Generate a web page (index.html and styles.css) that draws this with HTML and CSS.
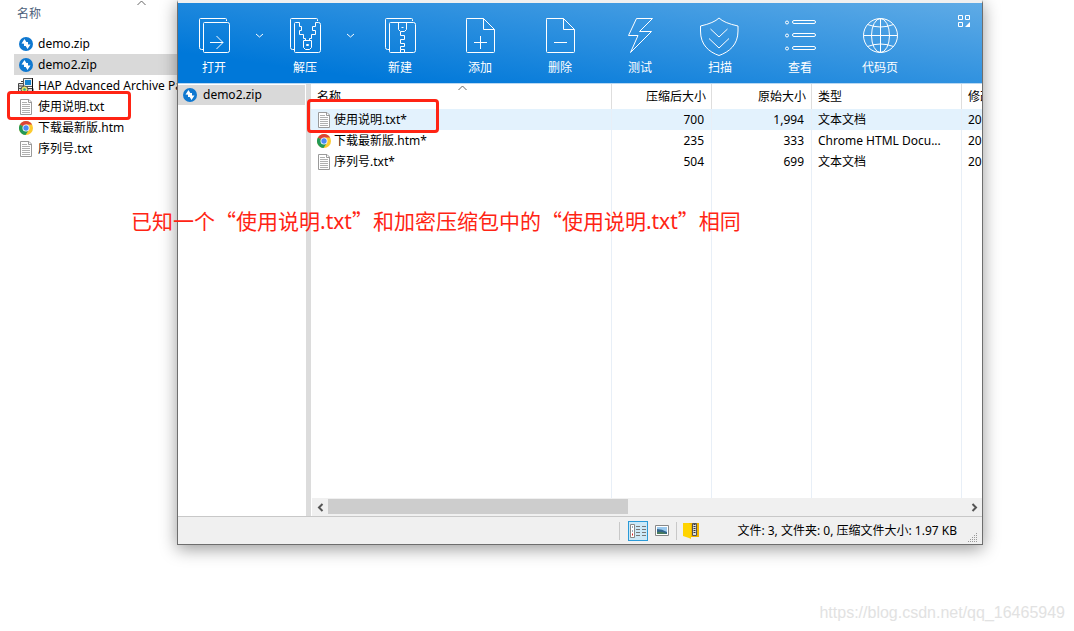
FILE: index.html
```html
<!DOCTYPE html>
<html lang="zh-CN">
<head>
<meta charset="utf-8">
<title>demo2.zip</title>
<link rel="stylesheet" href="styles.css">
</head>
<body>
<svg class="defs" aria-hidden="true">
  <defs>
    <symbol id="zip" viewBox="0 0 16 16"><circle cx="8" cy="8" r="7" fill="#0f78d0"/><path d="M6.500 3L9.500 8 3.500 7.500zM9.500 13L6.500 8l6 .500zM6 6h4v4H6z" fill="#fff"/></symbol>
    <symbol id="txt" viewBox="0 0 16 16"><path d="M2.500.500h8.500l2.500 2.500v12.500h-11z" fill="#fff" stroke="#9a9a9a"/><path d="M10.500.500v3h3" fill="none" stroke="#9a9a9a"/><path d="M4 3.500h5M4 5.500h8M4 7.500h8M4 9.500h8M4 11.500h8M4 13.500h8" stroke="#b0b0b0"/></symbol>
    <symbol id="chrome" viewBox="0 0 16 16"><circle cx="8" cy="8" r="7" fill="#fccb30"/><path d="M8 8 1.900 4.500A7 7 0 0 1 14.100 4.500H8z" fill="#dc4437"/><path d="M1.900 4.500A7 7 0 0 0 7.500 15L11 9.700 8 8z" fill="#239957"/><circle cx="8" cy="8" r="3.500" fill="#fff"/><circle cx="8" cy="8" r="2.700" fill="#4a8af4"/></symbol>
  </defs>
</svg>
<main class="desktop">
  <section class="explorer">
    <header class="explorer-head">名称
      <svg class="sort" width="9" height="6" viewBox="0 0 9 6"><path d="M.500 5l4-4 4 4" fill="none" stroke="#666"/></svg>
    </header>
    <ul class="files">
      <li class="file"><svg class="icon"><use href="#zip"/></svg>demo.zip</li>
      <li class="file selected"><svg class="icon"><use href="#zip"/></svg>demo2.zip</li>
      <li class="file"><svg class="icon" viewBox="0 0 16 16"><path d="M.500 5.500h5v8h-5zM3 3.500h3M1 8h4M1 10.500h4" fill="#ddd" stroke="#444"/><path d="M5.500.500h9v8h-9z" fill="#eee" stroke="#555"/><path d="M7 2h6v5H7z" fill="#1685cf"/><path d="M5 10.500h10v4H5z" fill="#d8d8d8" stroke="#444"/><path d="M14.500 0v14" stroke="#111"/><circle cx="6.500" cy="11.500" r="3.500" fill="#e7e36a" stroke="#555"/><circle cx="6.500" cy="11.500" r="1.300" fill="#31a48b"/></svg>HAP Advanced Archive Password</li>
      <li class="file"><svg class="icon"><use href="#txt"/></svg>使用说明.txt</li>
      <li class="file"><svg class="icon"><use href="#chrome"/></svg>下载最新版.htm</li>
      <li class="file"><svg class="icon"><use href="#txt"/></svg>序列号.txt</li>
    </ul>
    <span class="mark mark-source"></span>
  </section>

  <section class="window">
    <nav class="toolbar">
      <div class="split">
        <button class="tool"><svg width="40" height="40" viewBox="0 0 40 40"><path d="M9 32.500H7.500a2 2 0 0 1-2-2v-28a1 1 0 0 1 1-1h25a1 1 0 0 1 1 1V4M10.500 5.500h23a2 2 0 0 1 2 2v26a2 2 0 0 1-2 2h-23a1 1 0 0 1-1-1v-28a1 1 0 0 1 1-1zM16 25.500h13M22.500 19l6.500 6.500-6.500 6.500"/></svg>打开</button>
        <button class="arrow" aria-label="打开选项"><svg width="9" height="6" viewBox="0 0 9 6"><path d="M1 1l3.500 3L8 1"/></svg></button>
      </div>
      <div class="split">
        <button class="tool"><svg width="40" height="40" viewBox="0 0 40 40"><path d="M9 32.500H7.500a2 2 0 0 1-2-2v-28a1 1 0 0 1 1-1h25a1 1 0 0 1 1 1V4M14.500 5.500h-4a1 1 0 0 0-1 1v28a1 1 0 0 0 1 1h23a2 2 0 0 0 2-2v-26a2 2 0 0 0-2-2h-3M14.500 5.500v4h2v4h-2v4h4v4h2v2M30.500 5.500v4h-3v4h3v4h-4v4h-2v2M18.500 23.500h8v7l-2 2h-4l-2-2zM21.500 27.500h2v1h-2z"/></svg>解压</button>
        <button class="arrow" aria-label="解压选项"><svg width="9" height="6" viewBox="0 0 9 6"><path d="M1 1l3.500 3L8 1"/></svg></button>
      </div>
      <button class="tool"><svg width="40" height="40" viewBox="0 0 40 40"><path d="M9 32.500H7.500a2 2 0 0 1-2-2v-28a1 1 0 0 1 1-1h25a1 1 0 0 1 1 1V4M10.500 5.500h23a2 2 0 0 1 2 2v26a2 2 0 0 1-2 2h-23a1 1 0 0 1-1-1v-28a1 1 0 0 1 1-1zM18.500 5.500v7l2 2h4l2-2v-7M21.500 10.500h2M20.500 15v3.500h4v4h-4v4h4v3h-4v3h4v3M20.500 32.500v3"/></svg>新建</button>
      <button class="tool"><svg width="40" height="40" viewBox="0 0 40 40"><path d="M6.500 1.500h17l11 11v22a1 1 0 0 1-1 1h-26a1 1 0 0 1-1-1v-32a1 1 0 0 1 1-1M23.500 1.500v11h11M14 25.500h13M20.500 19v13"/></svg>添加</button>
      <button class="tool"><svg width="40" height="40" viewBox="0 0 40 40"><path d="M6.500 1.500h17l11 11v22a1 1 0 0 1-1 1h-26a1 1 0 0 1-1-1v-32a1 1 0 0 1 1-1M23.500 1.500v11h11M14 25.500h13"/></svg>删除</button>
      <button class="tool"><svg width="40" height="40" viewBox="0 0 40 40"><path d="M16.500 1.500h16L19.500 14.500h12L10.500 35.500l7.500-17H8.500z"/></svg>测试</button>
      <button class="tool"><svg width="40" height="40" viewBox="0 0 40 40"><path d="M19 1q5 5 19 8v5c0 14-9 21-19 24.500C9 35 .500 28 .500 14V9Q14 6 19 1M10.500 12l8.500 8 8.500-8M9 21.500l10 9.500 10-9.500"/></svg>扫描</button>
      <button class="tool"><svg width="40" height="40" viewBox="0 0 40 40"><circle cx="7" cy="5.500" r="1.500"/><circle cx="7" cy="18.500" r="1.500"/><circle cx="7" cy="31.500" r="1.500"/><rect x="12.500" y="3.500" width="23" height="3" rx="1.500"/><rect x="12.500" y="16.500" width="23" height="3" rx="1.500"/><rect x="12.500" y="29.500" width="23" height="3" rx="1.500"/></svg>查看</button>
      <button class="tool"><svg width="40" height="40" viewBox="0 0 40 40"><circle cx="20.500" cy="18.500" r="17"/><ellipse cx="20.500" cy="18.500" rx="9" ry="17"/><path d="M20.500 1.500v34M3.500 18.500h34M7.500 7.500q13 5 26 0M7.500 29.500q13-5 26 0"/></svg>代码页</button>
      <button class="layout" aria-label="布局"><svg width="13" height="13" viewBox="0 0 13 13"><path d="M.500.500h4v4h-4zM7.500.500h4v4h-4zM.500 7.500h4v4h-4z" fill="none" stroke="#fff"/><path class="solid" d="M12 7v5H7z"/></svg></button>
    </nav>
    <div class="body">
      <aside class="tree"><div class="node"><svg class="icon"><use href="#zip"/></svg>demo2.zip</div></aside>
      <div class="pane">
        <svg class="sort" width="9" height="6" viewBox="0 0 9 6"><path d="M.500 5l4-4 4 4" fill="none" stroke="#666"/></svg>
        <table class="list">
          <colgroup><col class="c-name"><col class="c-size"><col class="c-size"><col class="c-type"><col></colgroup>
          <thead><tr><th>名称</th><th class="num">压缩后大小</th><th class="num">原始大小</th><th>类型</th><th>修改时间</th></tr></thead>
          <tbody>
            <tr class="current"><td><span class="entry"><svg class="icon"><use href="#txt"/></svg>使用说明.txt*</span></td><td class="num">700</td><td class="num">1,994</td><td>文本文档</td><td>20</td></tr>
            <tr><td><span class="entry"><svg class="icon"><use href="#chrome"/></svg>下载最新版.htm*</span></td><td class="num">235</td><td class="num">333</td><td>Chrome HTML Docu...</td><td>20</td></tr>
            <tr><td><span class="entry"><svg class="icon"><use href="#txt"/></svg>序列号.txt*</span></td><td class="num">504</td><td class="num">699</td><td>文本文档</td><td>20</td></tr>
            <tr class="rest"><td></td><td></td><td></td><td></td><td></td></tr>
          </tbody>
        </table>
        <div class="scroll">
          <button class="scroll-btn" aria-label="向左"><svg width="7" height="9" viewBox="0 0 7 9"><path d="M5.500 1L2 4.500 5.500 8" fill="none" stroke="#555" stroke-width="2"/></svg></button>
          <div class="track"><div class="thumb"></div></div>
          <button class="scroll-btn" aria-label="向右"><svg width="7" height="9" viewBox="0 0 7 9"><path d="M1.500 1L5 4.500 1.500 8" fill="none" stroke="#555" stroke-width="2"/></svg></button>
        </div>
        <span class="mark mark-entry"></span>
      </div>
    </div>
    <footer class="status">
      <span class="sep"></span>
      <button class="view active" aria-label="详细信息"><svg width="16" height="14" viewBox="0 0 16 14"><path d="M.500.500h4v13h-4z" fill="#fff" stroke="#888"/><path d="M2 3h1M2 7h1" stroke="#357"/><path d="M2 10.500h1" stroke="#d22" stroke-width="2"/><path d="M6 2.500h4M12 2.500h4M6 5.500h4M12 5.500h4M6 8.500h4M12 8.500h4M6 11.500h4M12 11.500h4" stroke="#777"/></svg></button>
      <button class="view" aria-label="缩略图"><svg width="14" height="12" viewBox="0 0 14 12"><path d="M.500.500h13v10H.500z" fill="#fff" stroke="#888"/><path d="M2 2h10v7H2z" fill="#9ac9ee"/><path d="M2 4q5 0 10 3v2H2z" fill="#31648c"/><path d="M2 7q5-1 10 2H2z" fill="#487b5c"/></svg></button>
      <span class="sep"></span>
      <button class="view" aria-label="压缩文件"><svg width="16" height="17" viewBox="0 0 16 17"><path d="M6 1h10v14H6z" fill="#f3b500"/><path d="M0 1h6l2 2v14l-2-1-6-2z" fill="#ffd400"/><path d="M9.500 1.500h4v12h-4z" fill="#ddd" stroke="#555"/><path d="M11.500 2v10" stroke="#333" stroke-width="2" stroke-dasharray="1 1"/></svg></button>
      <span class="summary">文件: 3, 文件夹: 0, 压缩文件大小: 1.97 KB</span>
      <svg class="grip" width="10" height="10" viewBox="0 0 10 10"><path d="M8 1.500h1M6 3.500h3M4 5.500h5M2 7.500h7M0 9.500h9" stroke="#999" stroke-dasharray="1 1"/></svg>
    </footer>
  </section>
  <p class="note">已知一个<span class="quote">“</span>使用说明.txt<span class="quote">”</span>和加密压缩包中的<span class="quote">“</span>使用说明.txt<span class="quote">”</span>相同</p>
  <p class="watermark">https://blog.csdn.net/qq_16465949</p>
</main>
</body>
</html>
```
FILE: styles.css
```css
* { box-sizing: border-box; }
body {
  margin: 0;
  background: #fff;
  color: #000;
  font: 12px/20px "Noto Sans", "Noto Sans CJK SC", sans-serif;
}
button {
  padding: 0;
  border: 0;
  background: none;
  color: inherit;
  font: inherit;
}
.defs { position: absolute; width: 0; height: 0; }
.desktop {
  position: relative;
  display: flex;
  align-items: flex-start;
  min-height: 100vh;
  overflow: hidden;
}
.icon { flex: none; width: 16px; height: 16px; }

.explorer {
  position: relative;
  flex: none;
  width: 177px;
  padding-left: 14px;
}
.explorer-head {
  position: relative;
  height: 33px;
  padding: 4px 3px;
  color: #4c607a;
}
.explorer-head .sort { position: absolute; left: 123px; top: 0; }
.files { margin: 0; padding: 0; list-style: none; }
.file {
  display: flex;
  align-items: center;
  gap: 4px;
  height: 21px;
  padding-left: 4px;
  overflow: hidden;
  white-space: nowrap;
}
.selected, .node { background: #d9d9d9; }

.mark { position: absolute; border: 3px solid #ff2414; border-radius: 4px; }
.mark-source { left: 7px; top: 91px; width: 124px; height: 29px; }
.mark-entry { left: -4px; top: 15px; width: 132px; height: 34px; }

.window {
  position: relative;
  flex: 1;
  min-width: 0;
  margin-right: 91px;
  border: 1px solid #6e6e6e;
  border-top: 3px solid #f0f0f0;
  box-shadow: 0 4px 16px rgba(0, 0, 0, .4);
  background: #fff;
}
.toolbar {
  display: flex;
  height: 81px;
  border-bottom: 1px solid #b9d8f2;
  background: linear-gradient(188deg, #5fabe6 0%, #0078d9 84%);
  color: #fff;
}
.toolbar svg { fill: none; stroke: #fff; }
.toolbar .solid { fill: #fff; stroke: none; }
.split { display: flex; }
.tool {
  display: flex;
  flex-direction: column;
  align-items: center;
  gap: 1px;
  width: 80px;
  padding-top: 14px;
}
.split .tool { width: 72px; }
.arrow { width: 19px; height: 63px; }
.layout { align-self: flex-start; margin: 12px 11px 0 auto; line-height: 0; }
.body { display: flex; height: 432px; }
.tree { flex: none; width: 128px; padding-top: 1px; }
.node {
  display: flex;
  align-items: center;
  gap: 5px;
  height: 20px;
  margin-right: 1px;
  padding-left: 4px;
}
.pane {
  position: relative;
  display: flex;
  flex: 1;
  flex-direction: column;
  min-width: 0;
  border-left: 5px solid #dcdcdc;
}
.pane > .sort { position: absolute; left: 147px; top: 1px; }
.list {
  width: 100%;
  height: 414px;
  table-layout: fixed;
  border-collapse: separate;
  border-spacing: 0;
}
.c-name { width: 301px; }
.c-size { width: 100px; }
.c-type { width: 150px; }
.list th, .list td {
  height: 21px;
  padding: 0 7px 0 6px;
  border-right: 1px solid #e8eff7;
  overflow: hidden;
  text-align: left;
  font-weight: 400;
  white-space: nowrap;
}
.list th { height: 25px; padding-right: 5px; border-color: #dedede; }
.list td:first-child { padding-left: 5px; }
.list th:last-child, .list td:last-child { border: 0; padding-right: 0; }
.list .num { text-align: right; }
.list .rest td { height: auto; }
.current { background: #e3f2fd; }
.entry { display: flex; align-items: center; gap: 2px; }
.scroll {
  display: flex;
  height: 18px;
  margin-left: 1px;
  background: #f0f0f0;
}
.scroll-btn { width: 16px; line-height: 0; }
.track { flex: 1; padding: 1px 0; }
.thumb { width: 47%; height: 15px; background: #cdcdcd; }
.status {
  position: relative;
  display: flex;
  align-items: center;
  gap: 4px;
  height: 28px;
  padding-right: 25px;
  border-top: 1px solid #c8c8c8;
  background: #f0f0f0;
}
.sep { width: 1px; height: 18px; background: #c8c8c8; }
.sep:first-child { margin: 0 4px 0 auto; }
.view {
  display: flex;
  align-items: center;
  justify-content: center;
  width: 20px;
  height: 20px;
}
.view.active { border: 1px solid #2a9ad8; background: #cce8f7; }
.summary { margin-left: 32px; white-space: nowrap; }
.grip { position: absolute; right: 4px; bottom: 2px; }
.note {
  position: absolute;
  left: 131px;
  top: 204px;
  margin: 0;
  color: #ff2414;
  font-size: 21px;
  line-height: 32px;
  white-space: nowrap;
}
.quote { font-family: "Noto Sans CJK SC", sans-serif; }
.watermark {
  position: absolute;
  right: 9px;
  bottom: 8px;
  margin: 0;
  color: #e2e2e2;
  font: 16px/20px "Liberation Sans", sans-serif;
}
```
